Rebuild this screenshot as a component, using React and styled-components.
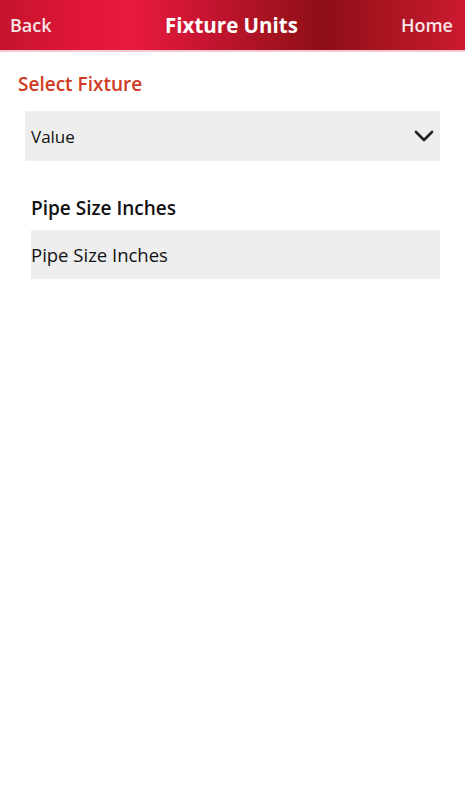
import React from "react";
import styled, { createGlobalStyle } from "styled-components";

const GlobalStyle = createGlobalStyle`
  html, body {
    margin: 0;
    padding: 0;
    background: #ffffff;
    font-family: "Open Sans", "Liberation Sans", sans-serif;
  }
`;

const Page = styled.div`
  width: 465px;
  min-height: 800px;
  background: #ffffff;
`;

const Header = styled.div`
  height: 52px;
  display: flex;
  align-items: center;
  justify-content: space-between;
  padding: 0 12px 0 10px;
  box-sizing: border-box;
  background: linear-gradient(
    90deg,
    #c4142c 0%,
    #e2163a 18%,
    #ea1a3c 28%,
    #c41530 45%,
    #a2121e 60%,
    #8e0f17 70%,
    #a81420 82%,
    #cc1a30 100%
  );
  border-bottom: 2px solid #f7c9cf;
`;

const HeaderLink = styled.div`
  font-family: "Open Sans", "Liberation Sans", sans-serif;
  font-size: 18px;
  font-weight: 600;
  color: #f6e6e8;
  width: 60px;
  text-align: ${(p) => p.align || "left"};
`;

const HeaderTitle = styled.div`
  font-family: "Open Sans", "Liberation Sans", sans-serif;
  font-size: 20.5px;
  font-weight: 700;
  color: #ffffff;
`;

const Content = styled.div`
  padding: 19px 25px 0 18px;
  display: flex;
  flex-direction: column;
`;

const SectionLabel = styled.div`
  font-family: "Open Sans", "Liberation Sans", sans-serif;
  font-size: 19px;
  font-weight: 600;
  color: #cf3b22;
  margin-bottom: 14px;
`;

const SelectBox = styled.div`
  margin-left: 7px;
  height: 50px;
  background: #eeeeee;
  display: flex;
  align-items: center;
  justify-content: space-between;
  padding: 0 6px;
  font-size: 17px;
  color: #111111;
`;

const FieldGroup = styled.div`
  margin-left: 13px;
  margin-top: 34px;
  display: flex;
  flex-direction: column;
`;

const FieldLabel = styled.div`
  font-family: "Open Sans", "Liberation Sans", sans-serif;
  font-size: 19px;
  font-weight: 600;
  color: #111111;
  margin-bottom: 9px;
`;

const InputBox = styled.div`
  height: 49px;
  background: #eeeeee;
  display: flex;
  align-items: center;
  font-size: 18.5px;
  color: #111111;
`;

const Chevron = () => (
  <svg width="20" height="14" viewBox="0 0 20 14">
    <path d="M2 3 L10 11 L18 3" fill="none" stroke="#222" strokeWidth="2.6" strokeLinecap="round" strokeLinejoin="round" />
  </svg>
);

export default function App() {
  return (
    <Page>
      <GlobalStyle />
      <Header>
        <HeaderLink>Back</HeaderLink>
        <HeaderTitle>Fixture Units</HeaderTitle>
        <HeaderLink align="right">Home</HeaderLink>
      </Header>
      <Content>
        <SectionLabel>Select Fixture</SectionLabel>
        <SelectBox>
          <span>Value</span>
          <Chevron />
        </SelectBox>
        <FieldGroup>
          <FieldLabel>Pipe Size Inches</FieldLabel>
          <InputBox>Pipe Size Inches</InputBox>
        </FieldGroup>
      </Content>
    </Page>
  );
}
